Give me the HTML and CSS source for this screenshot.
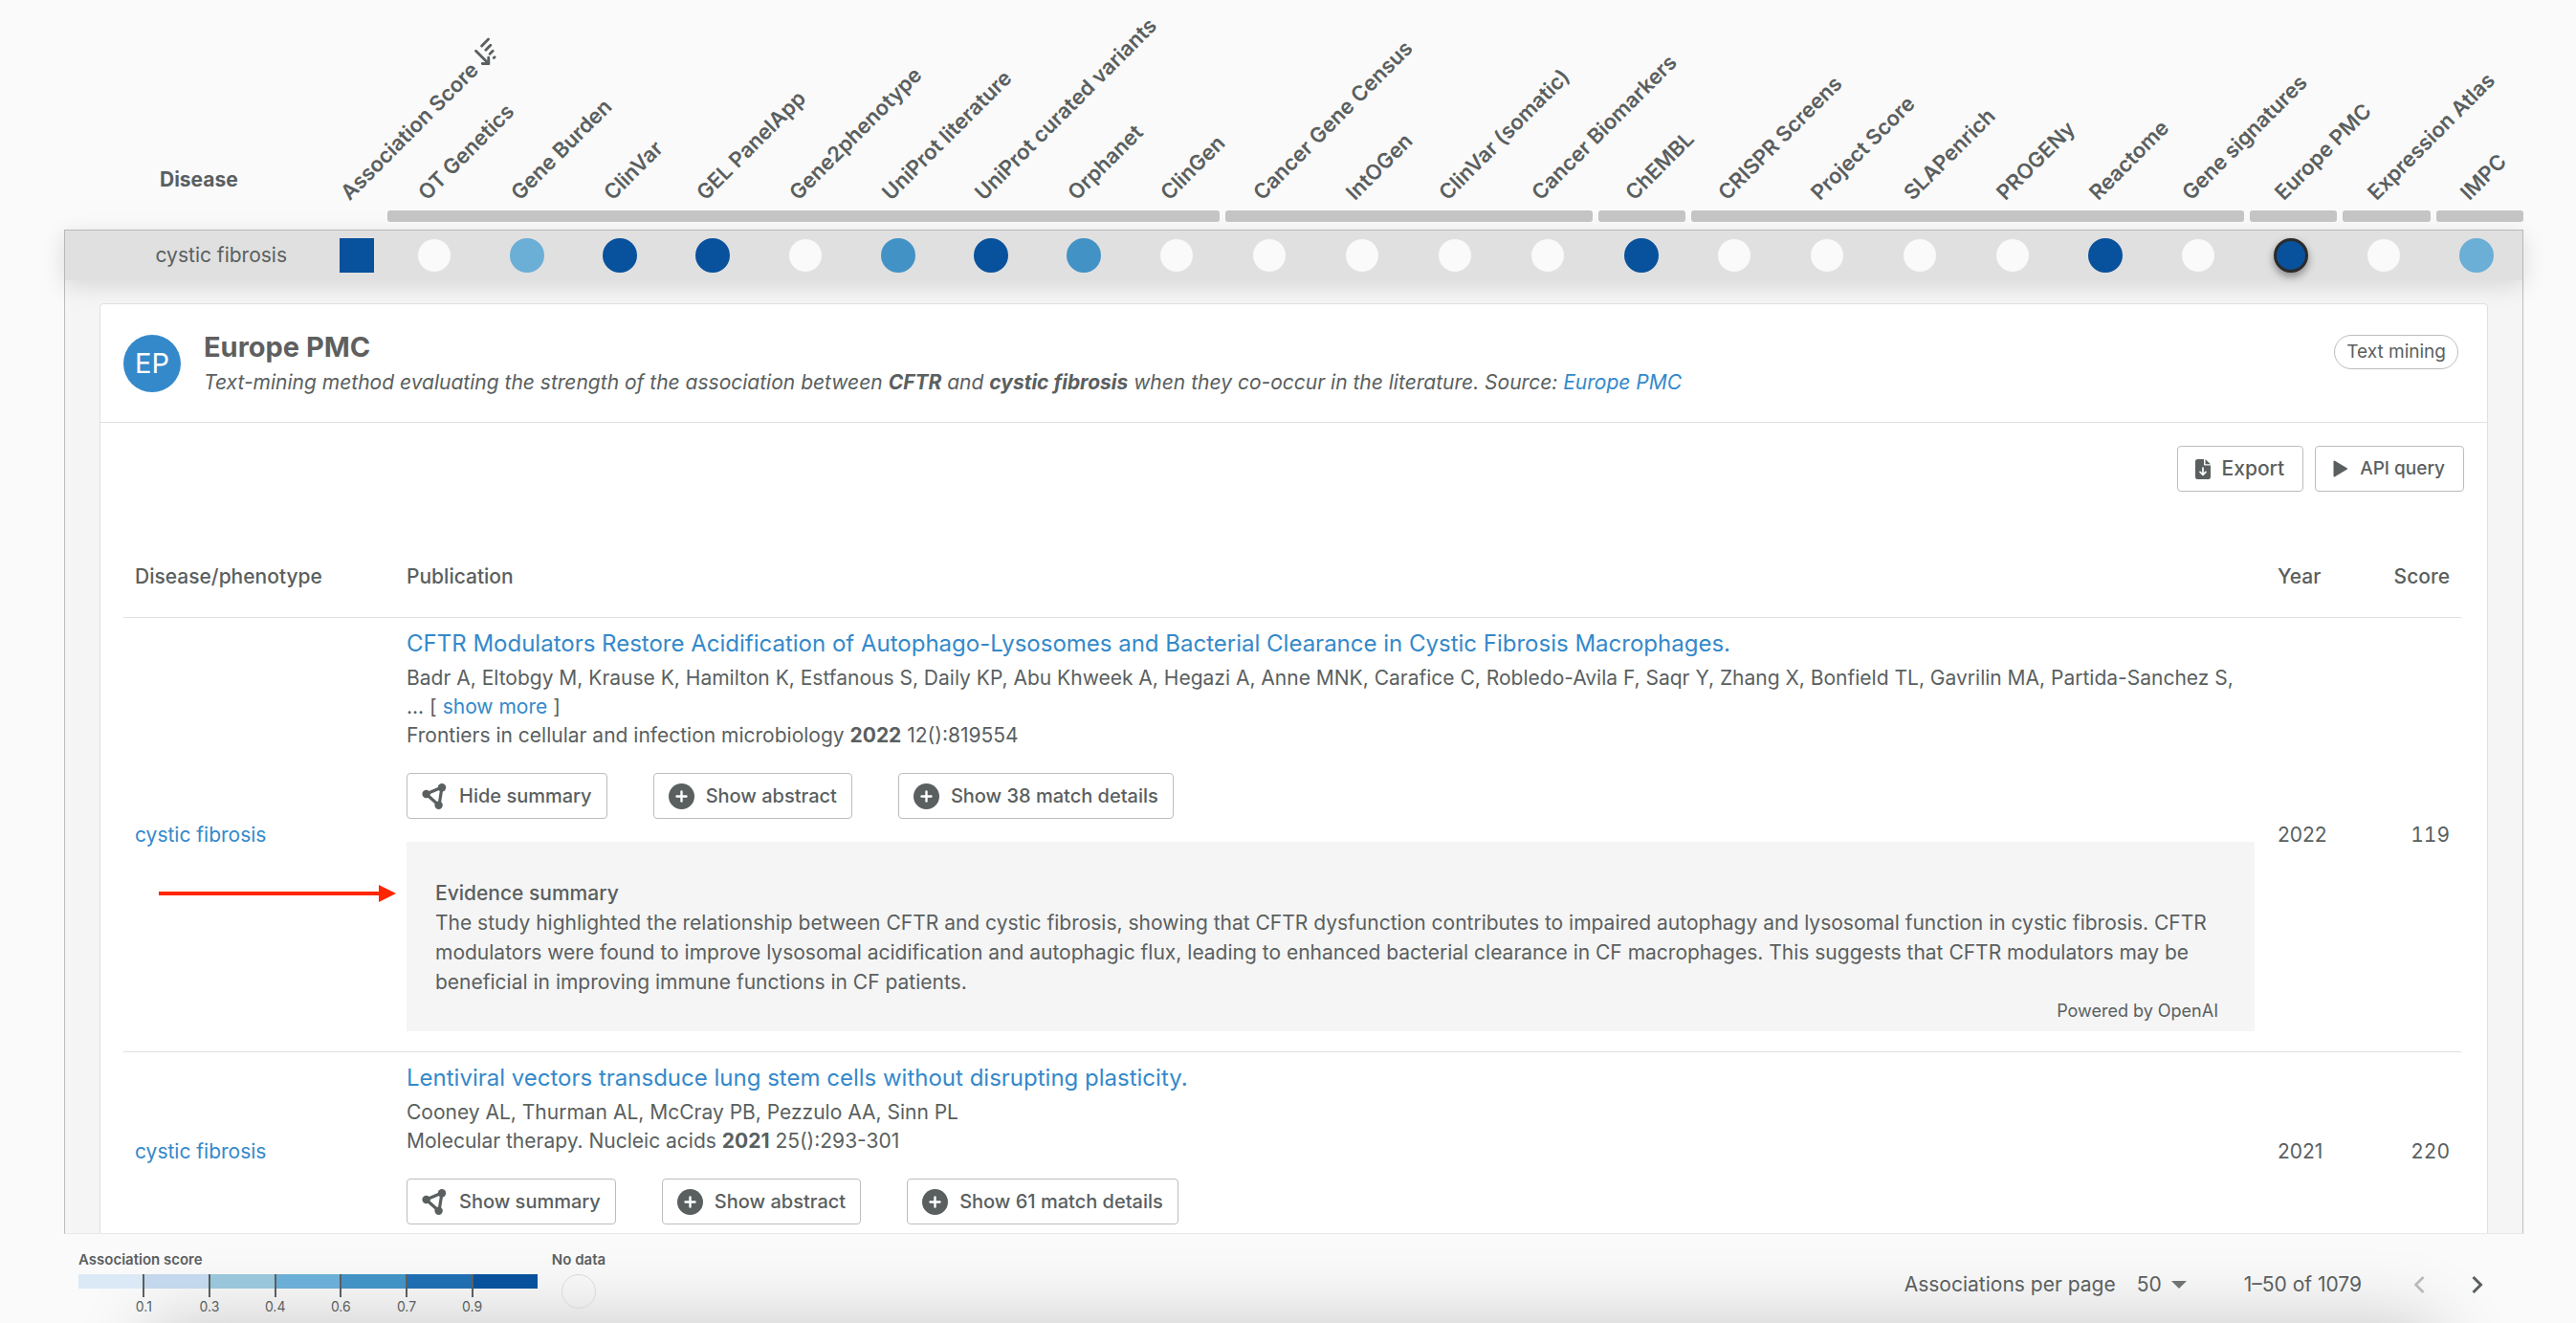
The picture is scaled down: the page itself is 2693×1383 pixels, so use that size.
FILE: index.html
```html
<!DOCTYPE html>
<html lang="en">
<head>
<meta charset="utf-8">
<title>CFTR associated diseases</title>
<link rel="stylesheet" href="styles.css">
</head>
<body>
<svg class="sprite" aria-hidden="true">
  <symbol id="icon-plus" viewBox="0 0 27 27">
    <circle cx="13.500" cy="13.500" r="13.500" fill="currentColor"/>
    <path d="M13.500 8.500v10M8.500 13.500h10" stroke="#fff" stroke-width="2.400" stroke-linecap="round"/>
  </symbol>
  <symbol id="icon-graph" viewBox="0 0 27 27">
    <path d="M4.500 11L21 4L18 23Z" fill="none" stroke="currentColor" stroke-width="3.200" stroke-linejoin="round"/>
    <circle cx="4.600" cy="11" r="4.200" fill="currentColor"/>
    <circle cx="21" cy="4.200" r="4.200" fill="currentColor"/>
    <circle cx="17.600" cy="22.800" r="4.200" fill="currentColor"/>
  </symbol>
</svg>
<main class="page">
  <table class="matrix">
    <colgroup><col class="col-name"><col class="col-score"><col span="23"></colgroup>
    <thead>
      <tr class="labels">
        <th class="disease-head" scope="col">Disease</th>
        <th scope="col"><div class="label">Association Score
          <svg class="sort" viewBox="0 0 24 24" fill="none" stroke="currentColor" stroke-width="2.600" stroke-linecap="round" stroke-linejoin="round" aria-hidden="true"><path d="M6 3v17M1.800 16L6 20.500L10.200 16M13.500 3.500h9M13.500 9h6.500M13.500 14.500h4M13.500 20h1"/></svg></div></th>
        <th scope="col"><div class="label">OT Genetics</div></th>
        <th scope="col"><div class="label">Gene Burden</div></th>
        <th scope="col"><div class="label">ClinVar</div></th>
        <th scope="col"><div class="label">GEL PanelApp</div></th>
        <th scope="col"><div class="label">Gene2phenotype</div></th>
        <th scope="col"><div class="label">UniProt literature</div></th>
        <th scope="col"><div class="label">UniProt curated variants</div></th>
        <th scope="col"><div class="label">Orphanet</div></th>
        <th scope="col"><div class="label">ClinGen</div></th>
        <th scope="col"><div class="label">Cancer Gene Census</div></th>
        <th scope="col"><div class="label">IntOGen</div></th>
        <th scope="col"><div class="label">ClinVar (somatic)</div></th>
        <th scope="col"><div class="label">Cancer Biomarkers</div></th>
        <th scope="col"><div class="label">ChEMBL</div></th>
        <th scope="col"><div class="label">CRISPR Screens</div></th>
        <th scope="col"><div class="label">Project Score</div></th>
        <th scope="col"><div class="label">SLAPenrich</div></th>
        <th scope="col"><div class="label">PROGENy</div></th>
        <th scope="col"><div class="label">Reactome</div></th>
        <th scope="col"><div class="label">Gene signatures</div></th>
        <th scope="col"><div class="label">Europe PMC</div></th>
        <th scope="col"><div class="label">Expression Atlas</div></th>
        <th scope="col"><div class="label">IMPC</div></th>
      </tr>
      <tr class="group-row">
        <td colspan="2"></td>
        <td colspan="23">
          <div class="groups">
            <span class="group span-9"></span><span class="group span-4"></span><span class="group"></span><span class="group span-6"></span><span class="group"></span><span class="group"></span><span class="group"></span>
          </div>
        </td>
      </tr>
    </thead>
    <tbody>
      <tr>
        <th class="disease-name" scope="row">cystic fibrosis</th>
        <td><button class="dot square s7" aria-label="Association Score"></button></td>
        <td><button class="dot" aria-label="OT Genetics"></button></td>
        <td><button class="dot s4" aria-label="Gene Burden"></button></td>
        <td><button class="dot s7" aria-label="ClinVar"></button></td>
        <td><button class="dot s7" aria-label="GEL PanelApp"></button></td>
        <td><button class="dot" aria-label="Gene2phenotype"></button></td>
        <td><button class="dot s5" aria-label="UniProt literature"></button></td>
        <td><button class="dot s7" aria-label="UniProt curated variants"></button></td>
        <td><button class="dot s5" aria-label="Orphanet"></button></td>
        <td><button class="dot" aria-label="ClinGen"></button></td>
        <td><button class="dot" aria-label="Cancer Gene Census"></button></td>
        <td><button class="dot" aria-label="IntOGen"></button></td>
        <td><button class="dot" aria-label="ClinVar (somatic)"></button></td>
        <td><button class="dot" aria-label="Cancer Biomarkers"></button></td>
        <td><button class="dot s7" aria-label="ChEMBL"></button></td>
        <td><button class="dot" aria-label="CRISPR Screens"></button></td>
        <td><button class="dot" aria-label="Project Score"></button></td>
        <td><button class="dot" aria-label="SLAPenrich"></button></td>
        <td><button class="dot" aria-label="PROGENy"></button></td>
        <td><button class="dot s7" aria-label="Reactome"></button></td>
        <td><button class="dot" aria-label="Gene signatures"></button></td>
        <td><button class="dot s7 active" aria-label="Europe PMC"></button></td>
        <td><button class="dot" aria-label="Expression Atlas"></button></td>
        <td><button class="dot s4" aria-label="IMPC"></button></td>
      </tr>
    </tbody>
  </table>

  <section class="details">
    <article class="panel">
      <header class="panel-head">
        <div class="avatar">EP</div>
        <div class="heading">
          <h2>Europe PMC</h2>
          <p>Text-mining method evaluating the strength of the association between <strong>CFTR</strong> and <strong>cystic fibrosis</strong> when they co-occur in the literature. Source: <a href="#">Europe PMC</a></p>
        </div>
        <span class="chip">Text mining</span>
      </header>
      <div class="toolbar">
        <button class="btn export">
          <svg width="16" height="21" viewBox="0 0 16 21" aria-hidden="true"><path d="M2.500 0H9v5.500a1 1 0 0 0 1 1h6v12a2.500 2.500 0 0 1-2.500 2.500h-11A2.500 2.500 0 0 1 0 18.500v-16A2.500 2.500 0 0 1 2.500 0Z" fill="currentColor"/><path d="M10.500 0L16 5.200h-5.500Z" fill="currentColor"/><path d="M8 9v7M5 13.300l3 3l3-3" fill="none" stroke="#fff" stroke-width="1.700" stroke-linecap="round" stroke-linejoin="round"/></svg>
          Export</button>
        <button class="btn query">
          <svg width="16" height="18" viewBox="0 0 16 18" aria-hidden="true"><path d="M1.500 1.500L14 9L1.500 16.500Z" fill="currentColor" stroke="currentColor" stroke-width="2" stroke-linejoin="round"/></svg>
          API query</button>
      </div>
      <div class="evidence">
        <table class="pubs">
          <colgroup><col class="c-disease"><col><col class="c-year"><col class="c-score"></colgroup>
          <thead>
            <tr><th scope="col">Disease/phenotype</th><th scope="col">Publication</th><th scope="col">Year</th><th scope="col" class="num">Score</th></tr>
          </thead>
          <tbody>
            <tr>
              <td><a href="#">cystic fibrosis</a></td>
              <td class="pub">
                <h3><a href="#">CFTR Modulators Restore Acidification of Autophago-Lysosomes and Bacterial Clearance in Cystic Fibrosis Macrophages.</a></h3>
                <p>Badr A, Eltobgy M, Krause K, Hamilton K, Estfanous S, Daily KP, Abu Khweek A, Hegazi A, Anne MNK, Carafice C, Robledo-Avila F, Saqr Y, Zhang X, Bonfield TL, Gavrilin MA, Partida-Sanchez S, <br>... [ <a href="#">show more</a> ]</p>
                <p>Frontiers in cellular and infection microbiology <strong>2022</strong> 12():819554</p>
                <div class="actions">
                  <button class="btn"><svg class="icon"><use href="#icon-graph"/></svg>Hide summary</button>
                  <button class="btn"><svg class="icon"><use href="#icon-plus"/></svg>Show abstract</button>
                  <button class="btn"><svg class="icon"><use href="#icon-plus"/></svg>Show 38 match details</button>
                </div>
                <div class="summary">
                  <svg class="pointer" viewBox="0 0 248 20" aria-hidden="true"><path d="M0 10h234" stroke="#ff2600" stroke-width="4"/><path d="M230 1l18 9l-18 9Z" fill="#ff2600"/></svg>
                  <h4>Evidence summary</h4>
                  <p>The study highlighted the relationship between CFTR and cystic fibrosis, showing that CFTR dysfunction contributes to impaired autophagy and lysosomal function in cystic fibrosis. CFTR modulators were found to improve lysosomal acidification and autophagic flux, leading to enhanced bacterial clearance in CF macrophages. This suggests that CFTR modulators may be beneficial in improving immune functions in CF patients.</p>
                  <p class="credit">Powered by OpenAI</p>
                </div>
              </td>
              <td>2022</td>
              <td class="num">119</td>
            </tr>
            <tr>
              <td><a href="#">cystic fibrosis</a></td>
              <td class="pub">
                <h3><a href="#">Lentiviral vectors transduce lung stem cells without disrupting plasticity.</a></h3>
                <p>Cooney AL, Thurman AL, McCray PB, Pezzulo AA, Sinn PL</p>
                <p>Molecular therapy. Nucleic acids <strong>2021</strong> 25():293-301</p>
                <div class="actions">
                  <button class="btn"><svg class="icon"><use href="#icon-graph"/></svg>Show summary</button>
                  <button class="btn"><svg class="icon"><use href="#icon-plus"/></svg>Show abstract</button>
                  <button class="btn"><svg class="icon"><use href="#icon-plus"/></svg>Show 61 match details</button>
                </div>
              </td>
              <td>2021</td>
              <td class="num">220</td>
            </tr>
          </tbody>
        </table>
      </div>
    </article>
  </section>

  <footer class="footer">
    <div class="legend">
      <h5>Association score</h5>
      <div class="scale"><i class="s1"></i><i class="s2"></i><i class="s3"></i><i class="s4"></i><i class="s5"></i><i class="s6"></i><i class="s7"></i></div>
      <div class="ticks"><span>0.1</span><span>0.3</span><span>0.4</span><span>0.6</span><span>0.7</span><span>0.9</span></div>
    </div>
    <div class="nodata"><h5>No data</h5><span class="ring"></span></div>
    <nav class="pager">
      <label for="per-page">Associations per page</label>
      <span class="select"><select id="per-page"><option>50</option><option>100</option></select><svg width="16" height="8" viewBox="0 0 16 8" aria-hidden="true"><path d="M0 0h16L8 8Z" fill="#707372"/></svg></span>
      <span class="range">1–50 of 1079</span>
      <button class="arrow" disabled aria-label="Previous page"><svg width="12" height="18" viewBox="0 0 12 18" fill="none" stroke="currentColor" stroke-width="2.600"><path d="M10.500 1L2.500 9l8 8"/></svg></button>
      <button class="arrow" aria-label="Next page"><svg width="12" height="18" viewBox="0 0 12 18" fill="none" stroke="currentColor" stroke-width="3"><path d="M1.500 1l8 8l-8 8"/></svg></button>
    </nav>
  </footer>
</main>
</body>
</html>
```
FILE: styles.css
```css
* { box-sizing: border-box; }

body {
  margin: 0;
  background: #fafafa;
  color: #5a5f5f;
  font: 400 21px/30px Inter, "Liberation Sans", sans-serif;
}

h2, h3, h4, h5, p { margin: 0; font-size: inherit; font-weight: 400; }
a { color: #3489ca; text-decoration: none; }
button { font: inherit; color: inherit; cursor: pointer; }
strong { font-weight: 700; }
.sprite { position: absolute; width: 0; height: 0; }

.page {
  display: flex;
  flex-direction: column;
  height: 100vh;
  padding: 0 55px 0 67px;
  overflow: hidden;
}

/* Association matrix */
.matrix {
  width: 100%;
  flex: none;
  table-layout: fixed;
  border-collapse: separate;
  border-spacing: 0;
  position: relative;
  z-index: 1;
}
.matrix th, .matrix td { padding: 0; }
.col-name { width: 274px; }
.col-score { width: 64px; }
.labels { height: 220px; }
.labels th { vertical-align: bottom; font-size: 22px; font-weight: 600; text-align: left; }
.labels .disease-head { padding: 0 0 17px 100px; font-size: 21px; font-weight: 700; }
.label {
  width: 0;
  margin: 0 0 6px calc(50% - 4px);
  line-height: 26px;
  white-space: nowrap;
  transform: rotate(-45deg);
  transform-origin: 0 100%;
}
.sort { width: 26px; height: 26px; vertical-align: -5px; }
.group-row td { height: 20px; vertical-align: top; }
.groups { display: grid; grid-template-columns: repeat(23, 1fr); column-gap: 6px; }
.group { height: 12px; border-radius: 3px; background: #c4c4c4; }
.span-9 { grid-column: span 9; }
.span-4 { grid-column: span 4; }
.span-6 { grid-column: span 6; }

.matrix tbody tr { box-shadow: 0 6px 24px rgba(0, 0, 0, .12); }
.matrix tbody th, .matrix tbody td {
  height: 53px;
  border-top: 1px solid #b8b8b8;
  background: #e0e0e0;
  text-align: center;
  font-weight: 400;
}
.matrix tbody th { border-left: 1px solid #b8b8b8; }
.matrix tbody td:last-child { border-right: 1px solid #b8b8b8; }
.matrix tbody .disease-name { padding-right: 41px; text-align: right; }
.dot {
  display: block;
  width: 36px;
  height: 36px;
  margin: 0 auto;
  padding: 0;
  border: 1px solid #e0e0e0;
  border-radius: 50%;
  background: #fafafa;
}
.dot.square { border-radius: 0; }
.dot[class*=" s"] { border: 0; }
.s1 { background: #dbe9f6; }
.s2 { background: #c3d7ed; }
.s3 { background: #99c6da; }
.s4 { background: #6baed6; }
.s5 { background: #4292c6; }
.s6 { background: #206eb2; }
.s7 { background: #08519c; }
.dot.active { border: 3px solid #2b2b2b; box-shadow: 0 4px 8px rgba(0, 0, 0, .4); }

/* Evidence details */
.details {
  flex: 1;
  min-height: 0;
  overflow: hidden;
  padding: 24px 36px 0;
  border: 1px solid #bdbdbd;
  border-top: 0;
  border-bottom-color: #e8e8e8;
  background: #f5f5f5;
}
.panel { border: 1px solid #e0e0e0; border-radius: 4px; background: #fff; }
.panel-head {
  display: flex;
  align-items: center;
  gap: 24px;
  padding: 27px 30px 26px 24px;
  border-bottom: 1px solid #e0e0e0;
}
.avatar {
  width: 60px;
  height: 60px;
  border-radius: 50%;
  background: #3489ca;
  color: #fff;
  font-size: 29px;
  line-height: 60px;
  text-align: center;
}
.heading { flex: 1; }
.heading h2 { margin-bottom: 4px; font-size: 29px; line-height: 36px; font-weight: 700; color: #5f5f5f; }
.heading p { font-style: italic; }
.chip {
  align-self: flex-start;
  margin-top: 5px;
  padding: 0 12px;
  border: 1px solid #bdbdbd;
  border-radius: 18px;
  font-size: 19px;
  line-height: 34px;
}
.toolbar { display: flex; justify-content: flex-end; gap: 12px; padding: 24px 24px 46px; }
.btn {
  display: inline-flex;
  align-items: center;
  gap: 12px;
  height: 48px;
  padding: 0 19px 0 15px;
  border: 1px solid #bdbdbd;
  border-radius: 4px;
  background: #fff;
  font-size: 19px;
  font-weight: 500;
}
.export, .query { padding-left: 18px; }
.export { font-size: 21px; }
.icon { width: 27px; height: 27px; overflow: visible; }

.evidence { padding: 0 27px 0 24px; }
.pubs { width: 100%; table-layout: fixed; border-collapse: separate; border-spacing: 0; }
.c-disease { width: 284px; }
.c-year { width: 112px; }
.c-score { width: 92px; }
.pubs th { padding: 28px 12px 27px; border-bottom: 1px solid #e0e0e0; text-align: left; font-weight: 500; }
.pubs td { padding: 16px 12px; border-bottom: 1px solid #e0e0e0; vertical-align: middle; }
.pubs .pub { padding: 12px 12px 21px; }
.pubs .num { text-align: right; font-variant-numeric: tabular-nums; }
.pubs h3 { margin-bottom: 6px; font-size: 24px; }
.actions { display: flex; gap: 48px; padding: 24px 0 7px; }
.actions .btn { padding: 0 15px; font-size: 20px; }
.summary { position: relative; margin-top: 17px; padding: 39px 38px 6px 30px; background: #f5f5f5; }
.summary h4 { font-weight: 500; }
.summary p { line-height: 31px; }
.summary .credit { line-height: 30px; font-size: 18px; text-align: right; }
.pointer { position: absolute; top: 44px; right: calc(100% + 11px); width: 248px; height: 20px; }

/* Legend and pagination */
.footer {
  position: relative;
  display: flex;
  align-items: flex-start;
  flex: none;
  height: 93px;
  padding: 17px 32px 0 15px;
}
.footer::after {
  content: "";
  position: absolute;
  z-index: -1;
  top: 100%;
  left: 90px;
  right: 90px;
  height: 120px;
  box-shadow: 0 0 80px rgba(0, 0, 0, .2);
}
.footer h5 { font-size: 15px; line-height: 20px; font-weight: 600; }
.legend { width: 480px; }
.scale { display: grid; grid-template-columns: repeat(7, 1fr); height: 15px; margin-top: 5px; }
.ticks {
  display: grid;
  grid-template-columns: repeat(6, 1fr);
  margin: -15px 34px 0;
  font-size: 14px;
  line-height: 20px;
  text-align: center;
}
.ticks span::before { content: ""; display: block; width: 2px; height: 24px; margin: 0 auto; background: #5a5f5f; }
.nodata { width: 86px; text-align: center; }
.ring { display: block; width: 36px; height: 36px; margin: 5px auto 0; border: 1px solid #d8d8d8; border-radius: 50%; }
.pager { display: flex; align-items: center; margin: 21px 0 0 auto; }
.select { display: inline-flex; align-items: center; margin: 0 60px 0 22px; }
.select svg { margin-left: -16px; pointer-events: none; }
.select select {
  width: 52px;
  padding: 0;
  border: 0;
  background: none;
  color: inherit;
  font: inherit;
  appearance: none;
}
.range { margin-right: 36px; }
.arrow { display: flex; justify-content: center; width: 48px; padding: 6px 0; border: 0; background: none; }
.arrow + .arrow { margin-left: 13px; }
.arrow:disabled { color: #b8baba; }
.arrow:last-child { margin-right: -8px; }
```
